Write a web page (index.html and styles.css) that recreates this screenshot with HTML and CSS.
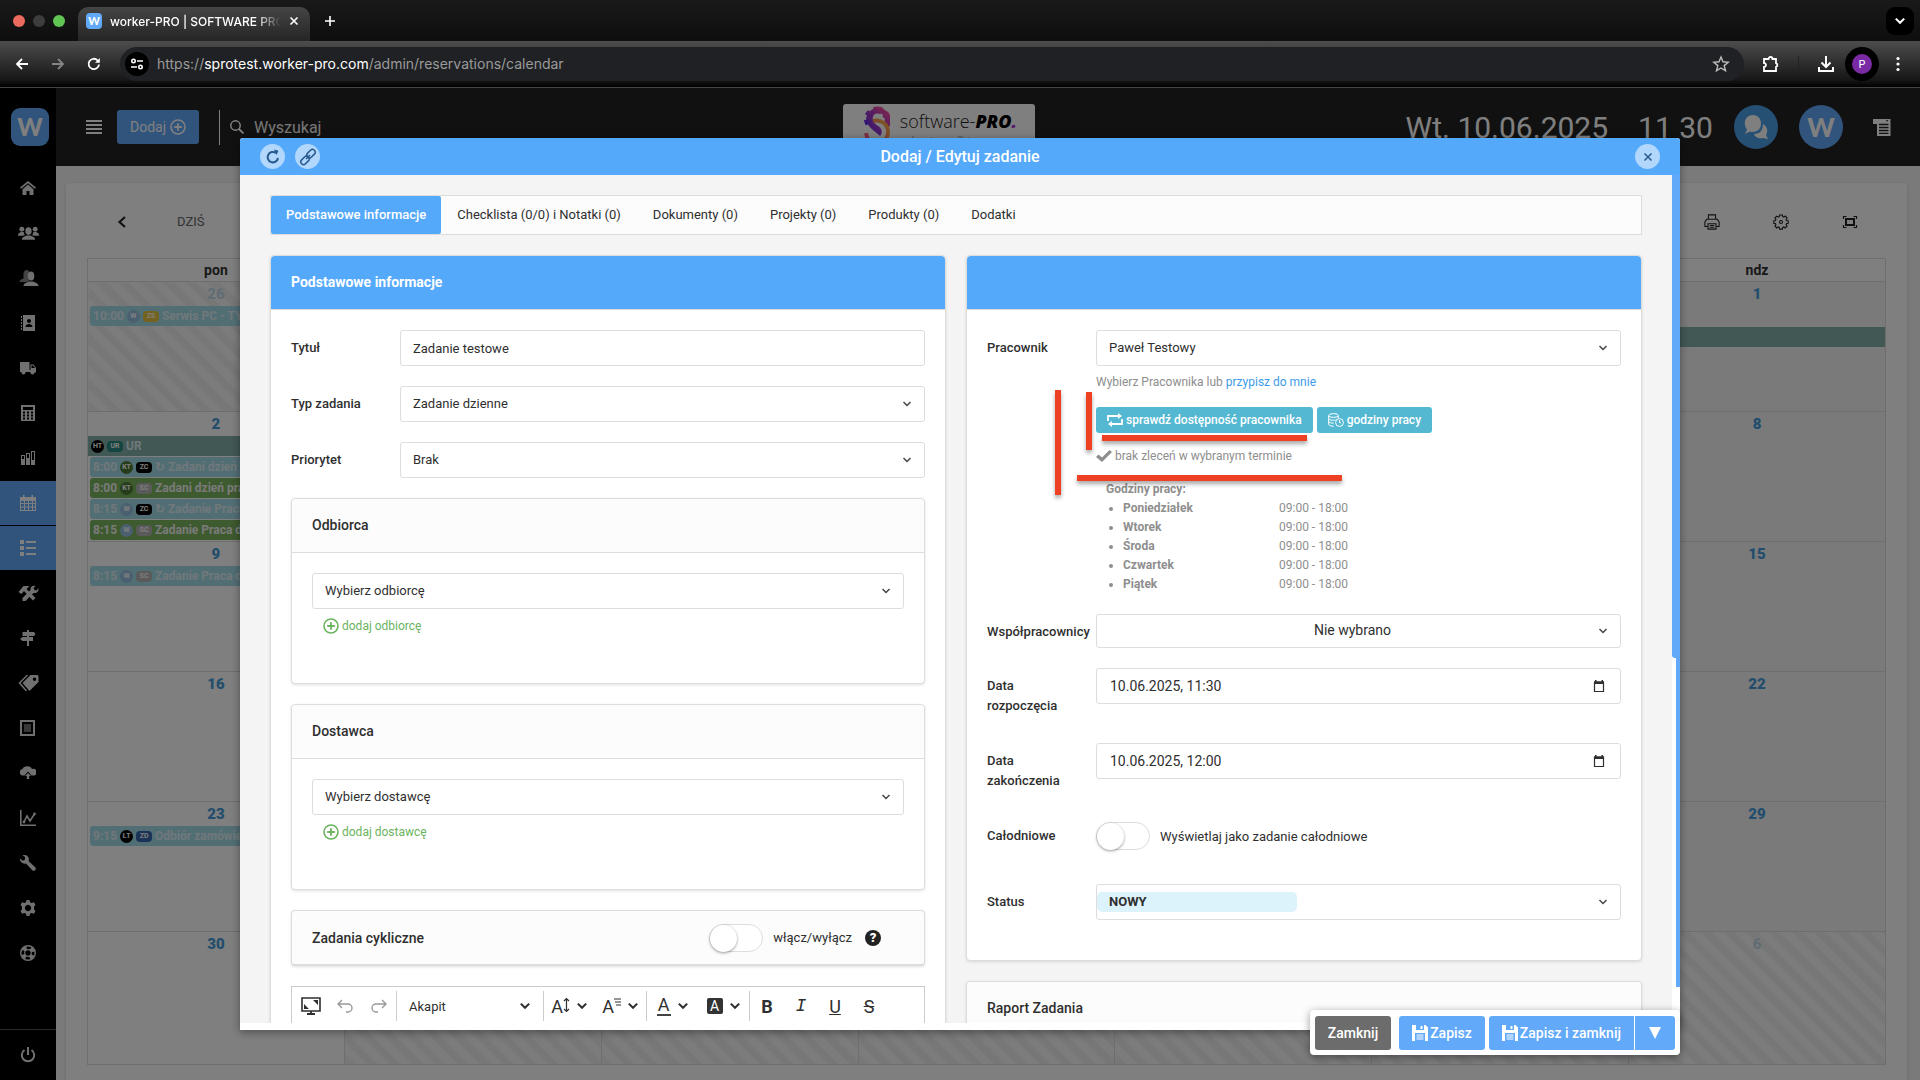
FILE: index.html
```html
<!DOCTYPE html>
<html lang="pl">
<head>
    <meta charset="UTF-8">
    <meta name="viewport" content="width=device-width, initial-scale=1.0">
    <title>worker-PRO | SOFTWARE PRO</title>
    <link rel="stylesheet" href="styles.css">
</head>
<body>
    <!-- icons -->
    <svg class="sprite" xmlns="http://www.w3.org/2000/svg">
        <symbol id="i-plus" viewBox="0 0 16 16"><circle cx="8" cy="8" r="7" fill="none" stroke="currentColor" stroke-width="1.6"/><path d="M8 4.2v7.6M4.2 8h7.6" stroke="currentColor" stroke-width="1.8"/></symbol>
        <symbol id="i-chevron" viewBox="0 0 10 10"><path d="M1.500 3l3.500 3.500 3.500-3.500" fill="none" stroke="currentColor" stroke-width="1.700"/></symbol>
        <symbol id="i-save" viewBox="0 0 16 16"><path fill="currentColor" fill-rule="evenodd" d="M0 0h13.500L16 2.500V16H0zM4 0v5h8V0zM3 8v8h10V8z"/><path fill="currentColor" d="M8.500 1h2v3h-2zM4.500 9.500h7v1h-7zM4.500 11.500h7v1h-7zM4.500 13.500h7v1h-7z"/></symbol>
        <symbol id="i-date" viewBox="0 0 14 14"><path d="M2.500 3h9v9.500h-9z" fill="none" stroke="currentColor" stroke-width="1.200"/><path d="M2 2.500h10V5H2zM3 1h1.500v2H3zM9.500 1H11v2H9.500z" fill="currentColor"/></symbol>
    </svg>

    <!-- browser bar -->
    <div class="browser">
        <div class="tab-strip">
            <span class="dot dot-red"></span>
            <span class="dot dot-gray"></span>
            <span class="dot dot-green"></span>
            <div class="browser-tab">
                <span class="favicon">W</span>
                <span class="tab-title">worker-PRO | SOFTWARE PRO</span>
                <button class="plain" aria-label="Zamknij kartę"><svg width="10" height="10" viewBox="0 0 10 10"><path d="M1.500 1.500l7 7m0-7l-7 7" stroke="currentColor" stroke-width="1.600"/></svg></button>
            </div>
            <button class="plain new-tab" aria-label="Nowa karta"><svg width="12" height="12" viewBox="0 0 12 12"><path d="M6 1v10M1 6h10" stroke="currentColor" stroke-width="1.600"/></svg></button>
            <button class="plain tab-list" aria-label="Lista kart"><svg width="12" height="12"><use href="#i-chevron"/></svg></button>
        </div>
        <div class="toolbar">
            <button class="plain" aria-label="Wstecz"><svg width="16" height="16" viewBox="0 0 16 16"><path d="M14 8H3M8 3L3 8l5 5" fill="none" stroke="currentColor" stroke-width="1.800"/></svg></button>
            <button class="plain disabled" aria-label="Dalej"><svg width="16" height="16" viewBox="0 0 16 16"><path d="M2 8h11M8 3l5 5-5 5" fill="none" stroke="currentColor" stroke-width="1.800"/></svg></button>
            <button class="plain" aria-label="Odśwież"><svg width="16" height="16" viewBox="0 0 16 16"><path d="M13 8.500A5.200 5.200 0 1 1 11.500 4.300L13 6" fill="none" stroke="currentColor" stroke-width="1.800"/><path d="M13.800 2v4.800H9z" fill="currentColor"/></svg></button>
            <div class="address">
                <span class="site-info"><svg width="14" height="14" viewBox="0 0 14 14" fill="none" stroke="currentColor" stroke-width="1.600"><circle cx="3.500" cy="4" r="1.700"/><path d="M7 4h6M1 10h6"/><circle cx="10.500" cy="10" r="1.700"/></svg></span>
                <span class="url">https://<b>sprotest.worker-pro.com</b>/admin/reservations/calendar</span>
                <svg class="star" width="18" height="18" viewBox="0 0 18 18"><path d="M9 2l2 4.800 5.200.4-4 3.400 1.300 5.100L9 13l-4.500 2.700 1.300-5.100-4-3.400L7 6.800z" fill="none" stroke="currentColor" stroke-width="1.400"/></svg>
            </div>
            <svg class="puzzle" width="18" height="18" viewBox="0 0 18 18"><path d="M2 4h4.500a2 2 0 0 1 4 0H14v4.200a2 2 0 0 1 0 3.800v4H2v-4a2 2 0 0 0 0-4z" fill="none" stroke="currentColor" stroke-width="1.800"/></svg>
            <span class="bar-divider"></span>
            <svg class="download" width="18" height="18" viewBox="0 0 18 18"><path d="M9 1v11M4.500 7.500L9 12l4.500-4.500M2 12v4h14v-4" fill="none" stroke="currentColor" stroke-width="2"/></svg>
            <span class="profile"><span>P</span></span>
            <svg class="more" width="6" height="18" viewBox="0 0 6 18" fill="currentColor"><circle cx="3" cy="3.500" r="1.600"/><circle cx="3" cy="9" r="1.600"/><circle cx="3" cy="14.500" r="1.600"/></svg>
        </div>
    </div>

    <div class="app">
        <!-- side menu -->
        <nav class="sidebar">
            <a href="#" class="brand">W</a>
            <a href="#" class="nav-item" aria-label="Start"><svg viewBox="0 0 16 16"><path d="M8 1L0 7.500l1.200 1.300L8 3.200l6.800 5.600L16 7.500z"/><path d="M2.500 9.200V15h4v-4h3v4h4V9.200L8 4.600z"/></svg></a>
            <a href="#" class="nav-item" aria-label="Zespół"><svg class="wide" viewBox="0 0 22 16"><circle cx="4" cy="4" r="2.600"/><circle cx="18" cy="4" r="2.600"/><ellipse cx="11" cy="6" rx="3.300" ry="4"/><path d="M0 10c0-2 2-2.500 3-3h3c0 2 1 3 1.500 3.200L5 11H0zM22 10c0-2-2-2.500-3-3h-3c0 2-1 3-1.500 3.200L17 11h5zM4 15c0-3 3-3.500 5-4.500h4c2 1 5 1.500 5 4.500z"/></svg></a>
            <a href="#" class="nav-item" aria-label="Klienci"><svg class="wide" viewBox="0 0 20 16"><path opacity=".6" d="M5 4c0-5 6-5 6-1-2 2-2 6 0 8l-3 1H1c0-2 2-3 4-3.500z"/><ellipse cx="12.500" cy="6" rx="3.300" ry="4.500"/><path d="M5 16c0-3 4-3.500 5.500-4.500h4C16 12.500 20 13 20 16z"/></svg></a>
            <a href="#" class="nav-item" aria-label="Kontakty"><svg viewBox="0 0 16 16"><path fill-rule="evenodd" d="M3 0h12v16H3zM9 4a2 2 0 1 0 .01 0zM5.500 12h7c0-2-1.500-3-3.500-3s-3.500 1-3.500 3zM1 1h1v2H1zM1 4h1v2H1zM1 7h1v2H1zM1 10h1v2H1zM1 13h1v2H1z"/></svg></a>
            <a href="#" class="nav-item" aria-label="Pojazdy"><svg viewBox="0 0 16 16"><path fill-rule="evenodd" d="M0 2h9.500v9H0zM10.500 4.500h3L16 8v4.500h-5.500zM11.500 5.500V8H15l-2-2.500z"/><path d="M0 10h16v2H0z"/><circle cx="3.500" cy="12.500" r="2"/><circle cx="12.500" cy="12.500" r="2"/></svg></a>
            <a href="#" class="nav-item" aria-label="Kalkulator"><svg viewBox="0 0 16 16"><path fill-rule="evenodd" d="M1 0h14v16H1zM3 2v3h10V2zM3 6.500v2h2v-2zM7 6.500v2h2v-2zM11 6.500v2h2v-2zM3 9.500v2h2v-2zM7 9.500v2h2v-2zM11 9.500v2h2v-2zM3 12.500v2h2v-2zM7 12.500v2h2v-2zM11 12.500v2h2v-2z"/></svg></a>
            <a href="#" class="nav-item" aria-label="Statystyki"><svg viewBox="0 0 16 16"><path fill-rule="evenodd" d="M1 5h4v10H1zM2 6v3h2V6zM6 3h4v12H6zM7 4v4h2V4zM11 1h4v14h-4zM12 2v8h2V2z"/></svg></a>
            <a href="#" class="nav-item active" aria-label="Kalendarz"><svg viewBox="0 0 16 16"><path fill-rule="evenodd" d="M0 2h16v14H0zM1 6v2h3V6zM5 6v2h3V6zM9 6v2h3V6zM13 6v2h2V6zM1 9v2.500h3V9zM5 9v2.500h3V9zM9 9v2.500h3V9zM13 9v2.500h2V9zM1 12.500V15h3v-2.500zM5 12.500V15h3v-2.500zM9 12.500V15h3v-2.500zM13 12.500V15h2v-2.500zM3 0h1.500v2H3zM11.500 0H13v2h-1.500z"/></svg></a>
            <a href="#" class="nav-item active" aria-label="Lista zadań"><svg viewBox="0 0 16 16"><path d="M0 0h4v4H0zM0 6h4v4H0zM0 12h4v4H0zM6 1h10v2H6zM6 7h10v2H6zM6 13h10v2H6z"/></svg></a>
            <a href="#" class="nav-item" aria-label="Serwis"><svg class="wide" viewBox="0 0 20 16"><path d="M0 7l5-6h6L8 4l9 9-2.500 2.500L5.500 6 3 9z"/><path d="M4 13l8-8c-.5-3 2-5 5-4l-2 2 1 2 2 .5L20 3c.5 4-2 5.500-5 5l-8 8H4z"/></svg></a>
            <a href="#" class="nav-item" aria-label="Trasy"><svg viewBox="0 0 16 16"><path d="M7 0h2v16H7z"/><path d="M2.500 2H14l1.500 2L14 6H2.500zM13 7H2.500L0 9l2.500 2H13z"/></svg></a>
            <a href="#" class="nav-item" aria-label="Etykiety"><svg class="wide" viewBox="0 0 20 16"><path fill-rule="evenodd" d="M4 8l8-8h7l1 1v6l-9 9zM16 2.500a1.700 1.700 0 1 0 .01 0z"/><path d="M9 0L1 8l7 8M6.500 0" fill="none" stroke="currentColor" stroke-width="1.500"/></svg></a>
            <a href="#" class="nav-item" aria-label="Raporty"><svg viewBox="0 0 16 16"><path fill-rule="evenodd" d="M0 0h15v16H0zM2 2v12h11V2z"/><path d="M4 4.500h7v1H4zM4 6.500h7v1H4zM4 8.500h7v1H4zM4 10.500h7v1H4z"/></svg></a>
            <a href="#" class="nav-item" aria-label="Chmura"><svg viewBox="0 0 16 16"><path d="M2.500 10.500A3.300 3.300 0 0 1 2.500 4 5 4 0 0 1 12 4a3.300 3.300 0 0 1 2.500 6.500H11.500L8 6.500l-3.500 4z"/><path d="M8 8l3 3H9.200v3H6.800v-3H5z"/></svg></a>
            <a href="#" class="nav-item" aria-label="Analizy"><svg viewBox="0 0 16 16"><path d="M.8 0v15.200H16" fill="none" stroke="currentColor" stroke-width="1.600"/><path d="M4 12l3-6 3 5 4.500-7" fill="none" stroke="currentColor" stroke-width="1.600"/><circle cx="4" cy="12" r="1.400"/><circle cx="14.500" cy="4" r="1.400"/></svg></a>
            <a href="#" class="nav-item" aria-label="Narzędzia"><svg viewBox="0 0 16 16"><path d="M0 3.500l3 2.200 2-1L5 2 2.500.3C7-1 10 2.500 8.500 6l7 6.500c1 2-.8 4-3 3L6 8.500C3 9.500-.5 7 0 3.500z"/></svg></a>
            <a href="#" class="nav-item" aria-label="Ustawienia"><svg viewBox="0 0 16 16"><path fill-rule="evenodd" d="M6.500 0h3l.5 2.200 1.500.8L14 2.300l1.500 2.600L14 6.500v3l1.500 1.600L14 13.700l-2.500-.7-1.500.8-.5 2.200h-3L6 13.800 4.500 13l-2.500.7L.5 11.100 2 9.500v-3L.5 4.900 2 2.300l2.500.7L6 2.200zM8 4.800a3.200 3.200 0 1 0 .01 0z"/></svg></a>
            <a href="#" class="nav-item" aria-label="Pomoc"><svg viewBox="0 0 16 16" fill="none" stroke="currentColor"><circle cx="8" cy="8" r="7.300" stroke-width="1.400"/><circle cx="8" cy="8" r="5" stroke-width="4" stroke-dasharray="3.900 3.950" stroke-dashoffset="-2"/><circle cx="8" cy="8" r="3.300" stroke-width="1.200"/></svg></a>
            <a href="#" class="nav-item logout" aria-label="Wyloguj"><svg viewBox="0 0 16 16"><path d="M4.500 3a6.200 6.200 0 1 0 7 0M8 0v8" fill="none" stroke="currentColor" stroke-width="2"/></svg></a>
        </nav>

        <div class="main">
            <header class="topbar">
                <div class="topbar-left">
                    <button class="plain menu-btn" aria-label="Menu"><svg width="16" height="14" viewBox="0 0 16 14"><path d="M0 1h16M0 5h16M0 9h16M0 13h16" stroke="currentColor" stroke-width="2"/></svg></button>
                    <button class="add-btn">Dodaj <svg width="16" height="16"><use href="#i-plus"/></svg></button>
                    <form class="search">
                        <svg width="14" height="14" viewBox="0 0 14 14"><circle cx="5.500" cy="5.500" r="4.700" fill="none" stroke="currentColor" stroke-width="1.500"/><path d="M9 9l4.500 4.500" stroke="currentColor" stroke-width="1.800"/></svg>
                        <input type="text" placeholder="Wyszukaj" aria-label="Wyszukaj">
                    </form>
                </div>
                <div class="company">
                    <svg width="28" height="46" viewBox="0 0 28 46">
                        <defs>
                            <linearGradient id="g1" x1="0" y1="1" x2="1" y2="0"><stop offset="0" stop-color="#5a2ae8"/><stop offset="1" stop-color="#ff4a9e"/></linearGradient>
                            <linearGradient id="g2" x1="1" y1="0" x2="0" y2="1"><stop offset="0" stop-color="#ffb43c"/><stop offset="1" stop-color="#ff4a9e"/></linearGradient>
                        </defs>
                        <path d="M23 24l4-2V13a12 11 0 1 0-21 9c3 4 6 5 11 10 3-3 2-8-2-10-8-4-6-13 0-13s8 5 6 10z" fill="url(#g1)"/>
                        <path d="M15 6a10 9 0 0 0-8 15M15 6a10 9 0 0 1 9 8" fill="none" stroke="url(#g1)" stroke-width="7" stroke-dasharray="4 4"/>
                        <path d="M10 17c8-2 15 3 15 11s-7 12-12 12S4 36 3 29" fill="none" stroke="url(#g2)" stroke-width="4"/>
                    </svg>
                    <div class="company-name">software-<b>PRO<i>.</i></b><small>we boost your efficiency</small></div>
                </div>
                <div class="topbar-right">
                    <span class="clock">Wt. 10.06.2025</span>
                    <span class="clock">11 30</span>
                    <button class="round chat" aria-label="Czat"><svg width="24" height="26" viewBox="0 0 24 26" fill="currentColor"><path d="M9 1c5 0 8 4 8 8.500S14 18 9 18c-1 0-2 0-3-.5L1 20l2-4.500C-1.500 10 1 1 9 1z"/><path d="M19 10c5 3 5 8 3 11l2 4-5-1c-5 1-8-1-9-4 6 0 9-4 9-10z"/></svg></button>
                    <button class="round avatar">W</button>
                    <svg class="log" width="18" height="17" viewBox="0 0 18 17"><path fill="currentColor" fill-rule="evenodd" d="M0 0h17.500v17H4V5H0zM6 4.800v1.400h9.500V4.800zM6 7.800v1.400h9.500V7.800zM6 10.800v1.400h9.500v-1.400zM6 13.800v1.200h9.500v-1.200zM13 1l1 2 1-2z"/></svg>
                </div>
            </header>

            <section class="panel">
                <div class="cal-toolbar">
                    <button class="plain" aria-label="Poprzedni"><svg width="10" height="12" viewBox="0 0 10 12"><path d="M8 1L2.500 6 8 11" fill="none" stroke="currentColor" stroke-width="2.200"/></svg></button>
                    <button class="plain today">DZIŚ</button>
                    <div class="cal-actions">
                        <svg width="16" height="16" viewBox="0 0 18 18" fill="none" stroke="currentColor" stroke-width="1.200"><path d="M5 6V1h8v5M4 14H1V9l2-3h12l2 3v5h-3M4.500 11h9v6h-9zM6.500 13h5M6.500 15h5"/></svg>
                        <svg width="16" height="16" viewBox="0 0 16 16" fill="none" stroke="currentColor" stroke-width="1.100"><path d="M6.600 1h2.800l.3 1.600 1.200.5 1.400-1 1.800 1.900-1 1.300.5 1.200 1.600.3v2.500l-1.600.3-.5 1.200 1 1.400-1.900 1.800-1.300-1-1.200.5-.3 1.600H6.600l-.3-1.600-1.200-.5-1.400 1-1.800-1.900 1-1.300-.5-1.200L.8 9.300V6.800l1.600-.3.5-1.200-1-1.400 1.900-1.800 1.300 1 1.200-.5z"/><circle cx="8" cy="8" r="1.500"/></svg>
                        <svg width="16" height="16" viewBox="0 0 16 16" fill="none" stroke="currentColor"><path d="M4 5h8v6H4z" stroke-width="2"/><path d="M1.500 5V2.500h3M11.500 2.500h3V5M14.500 11v2.500h-3M4.500 13.500h-3V11" stroke-width="1.200"/></svg>
                    </div>
                </div>
                <table class="calendar">
                    <thead>
                        <tr><th>pon</th><th></th><th></th><th></th><th></th><th></th><th>ndz</th></tr>
                    </thead>
                    <tbody>
                        <tr>
                            <td class="other"><span class="day">26</span>
                                <div class="event">10:00 <i class="who blue">W</i> <i class="tag yellow">ZS</i> Serwis PC - TYDZIEŃ</div>
                            </td>
                            <td></td><td></td><td></td><td></td><td></td>
                            <td class="weekend"><span class="day">1</span><div class="event all-day late"></div></td>
                        </tr>
                        <tr>
                            <td><span class="day">2</span>
                                <div class="event all-day"><i class="who black">HT</i> <i class="tag teal">UR</i> UR</div>
                                <div class="event">8:00 <i class="who green">KT</i> <i class="tag black">ZC</i> ↻ Zadani dzień pracy</div>
                                <div class="event done">8:00 <i class="who green">KT</i> <i class="tag gray">SC</i> Zadani dzień pracy</div>
                                <div class="event">8:15 <i class="who blue">W</i> <i class="tag black">ZC</i> ↻ Zadanie Praca dzień</div>
                                <div class="event done">8:15 <i class="who blue">W</i> <i class="tag gray">SC</i> Zadanie Praca dzień</div>
                            </td>
                            <td></td><td></td><td></td><td></td><td></td>
                            <td class="weekend"><span class="day">8</span></td>
                        </tr>
                        <tr>
                            <td><span class="day">9</span>
                                <div class="event">8:15 <i class="who blue">W</i> <i class="tag gray">SC</i> Zadanie Praca dzień</div>
                            </td>
                            <td></td><td></td><td></td><td></td><td></td>
                            <td class="weekend"><span class="day">15</span></td>
                        </tr>
                        <tr>
                            <td><span class="day">16</span></td>
                            <td></td><td></td><td></td><td></td><td></td>
                            <td class="weekend"><span class="day">22</span></td>
                        </tr>
                        <tr>
                            <td><span class="day">23</span>
                                <div class="event">9:15 <i class="who black">ŁT</i> <i class="tag navy">ZD</i> Odbiór zamówienia</div>
                            </td>
                            <td></td><td></td><td></td><td></td><td></td>
                            <td class="weekend"><span class="day">29</span></td>
                        </tr>
                        <tr class="last-week">
                            <td><span class="day">30</span></td>
                            <td class="other"></td><td class="other"></td><td class="other"></td><td class="other"></td><td class="other"></td>
                            <td class="weekend other"><span class="day">6</span></td>
                        </tr>
                    </tbody>
                </table>
            </section>
        </div>

        <!-- task modal -->
        <div class="backdrop">
            <div class="modal" role="dialog" aria-labelledby="modal-title">
                <div class="modal-header">
                    <button class="head-btn" aria-label="Odśwież"><svg width="16" height="16" viewBox="0 0 16 16"><path d="M13 9A5.200 5.200 0 1 1 11 4" fill="none" stroke="currentColor" stroke-width="2"/><path d="M9 .5l4.500 1.200L11.500 6z" fill="currentColor"/></svg></button>
                    <button class="head-btn" aria-label="Kopiuj link"><svg width="18" height="18" viewBox="0 0 18 18" fill="none" stroke="currentColor" stroke-width="1.500"><rect x="7.500" y="3" width="9.500" height="5.500" rx="2.700" transform="rotate(-45 12 6)"/><rect x="1" y="9.500" width="9.500" height="5.500" rx="2.700" transform="rotate(-45 6 12)"/><path d="M7 11l4-4"/></svg></button>
                    <h1 id="modal-title">Dodaj / Edytuj zadanie</h1>
                    <button class="head-btn close" aria-label="Zamknij okno"><svg width="10" height="10" viewBox="0 0 10 10"><path d="M1.500 1.500l7 7m0-7l-7 7" stroke="currentColor" stroke-width="1.500"/></svg></button>
                </div>

                <div class="modal-body">
                    <div class="tabs">
                        <button class="tab active">Podstawowe informacje</button>
                        <button class="tab">Checklista (0/0) i Notatki (0)</button>
                        <button class="tab">Dokumenty (0)</button>
                        <button class="tab">Projekty (0)</button>
                        <button class="tab">Produkty (0)</button>
                        <button class="tab">Dodatki</button>
                    </div>

                    <div class="columns">
                        <div class="column">
                            <div class="card">
                                <h2 class="card-head primary">Podstawowe informacje</h2>
                                <div class="card-body">
                                    <div class="row">
                                        <label for="title">Tytuł</label>
                                        <input class="field" type="text" id="title" value="Zadanie testowe">
                                    </div>
                                    <div class="row">
                                        <label for="type">Typ zadania</label>
                                        <select class="field" id="type"><option>Zadanie dzienne</option></select>
                                    </div>
                                    <div class="row">
                                        <label for="priority">Priorytet</label>
                                        <select class="field" id="priority"><option>Brak</option></select>
                                    </div>

                                    <div class="card sub">
                                        <h2 class="card-head">Odbiorca</h2>
                                        <div class="card-body">
                                            <select class="field" aria-label="Odbiorca"><option>Wybierz odbiorcę</option></select>
                                            <a href="#" class="add-link"><svg width="16" height="16"><use href="#i-plus"/></svg>dodaj odbiorcę</a>
                                        </div>
                                    </div>
                                    <div class="card sub">
                                        <h2 class="card-head">Dostawca</h2>
                                        <div class="card-body">
                                            <select class="field" aria-label="Dostawca"><option>Wybierz dostawcę</option></select>
                                            <a href="#" class="add-link"><svg width="16" height="16"><use href="#i-plus"/></svg>dodaj dostawcę</a>
                                        </div>
                                    </div>
                                    <div class="card cyclic">
                                        <h2>Zadania cykliczne</h2>
                                        <input class="switch" type="checkbox" id="cyclic">
                                        <label for="cyclic">włącz/wyłącz</label>
                                        <span class="help">?</span>
                                    </div>

                                    <div class="editor">
                                        <button class="tool" aria-label="Pełny ekran"><svg width="20" height="18" viewBox="0 0 20 18"><path d="M1 1h18v13H1z" fill="none" stroke="currentColor" stroke-width="1.600"/><path d="M6 17h8M10 14v3" stroke="currentColor" stroke-width="1.800"/><path d="M12 3h5v5zM3 7v5h5z" fill="currentColor"/></svg></button>
                                        <button class="tool off" aria-label="Cofnij"><svg width="16" height="14" viewBox="0 0 16 14"><path d="M5 1L1 5l4 4M1 5h10a3.800 3.800 0 0 1 0 8H9" fill="none" stroke="currentColor" stroke-width="1.400"/></svg></button>
                                        <button class="tool off" aria-label="Ponów"><svg width="16" height="14" viewBox="0 0 16 14"><path d="M11 1l4 4-4 4M15 5H5a3.800 3.800 0 0 0 0 8h2" fill="none" stroke="currentColor" stroke-width="1.400"/></svg></button>
                                        <span class="sep"></span>
                                        <button class="tool heading">Akapit <svg width="12" height="12"><use href="#i-chevron"/></svg></button>
                                        <span class="sep"></span>
                                        <button class="tool drop" aria-label="Rozmiar"><span>A<svg width="7" height="16" viewBox="0 0 7 16"><path d="M3.500 2v12M1 4l2.500-2.500L6 4M1 12l2.500 2.500L6 12" fill="none" stroke="currentColor" stroke-width="1.200"/></svg></span><svg width="12" height="12"><use href="#i-chevron"/></svg></button>
                                        <button class="tool drop" aria-label="Krój"><span>A<svg width="7" height="16" viewBox="0 0 7 16"><path d="M0 2h7M1 5h6M2 8h5" stroke="currentColor" stroke-width="1.200"/></svg></span><svg width="12" height="12"><use href="#i-chevron"/></svg></button>
                                        <span class="sep"></span>
                                        <button class="tool drop" aria-label="Kolor"><span class="under">A</span><svg width="12" height="12"><use href="#i-chevron"/></svg></button>
                                        <button class="tool drop" aria-label="Tło"><span class="filled">A</span><svg width="12" height="12"><use href="#i-chevron"/></svg></button>
                                        <span class="sep"></span>
                                        <button class="tool"><b>B</b></button>
                                        <button class="tool italic"><i>I</i></button>
                                        <button class="tool"><u>U</u></button>
                                        <button class="tool"><s>S</s></button>
                                    </div>
                                </div>
                            </div>
                        </div>

                        <div class="column">
                            <div class="card worker">
                                <h2 class="card-head primary"></h2>
                                <div class="card-body">
                                    <div class="row">
                                        <label for="worker">Pracownik</label>
                                        <div class="control">
                                            <select class="field" id="worker"><option>Paweł Testowy</option></select>
                                            <p class="hint">Wybierz Pracownika lub <a href="#">przypisz do mnie</a></p>
                                            <div class="mini-buttons">
                                                <button class="mini"><svg width="16" height="14" viewBox="0 0 16 14"><path d="M1 8V3h11M15 6v5H4" fill="none" stroke="currentColor" stroke-width="1.800"/><path d="M11 0l4 3-4 3zM5 8l-4 3 4 3z" fill="currentColor"/></svg> sprawdź dostępność pracownika</button>
                                                <button class="mini"><svg width="16" height="14" viewBox="0 0 16 14" fill="none" stroke="currentColor"><ellipse cx="5.500" cy="2.500" rx="4.800" ry="1.900"/><path d="M.7 2.500v9c0 1 3 1.800 5 1.800M.7 5.500c0 1.500 4 2.200 7 1.500M.7 8.500c0 1 3 1.800 5 1.700M10.300 2.500v2.800"/><circle cx="11.500" cy="9.500" r="3.900"/><path d="M11.500 7v2.700H13"/></svg> godziny pracy</button>
                                            </div>
                                            <p class="free"><svg width="16" height="12" viewBox="0 0 16 12"><path d="M0 7l2.500-2.500L6 7.500 13.500 0 16 2 6 12z" fill="currentColor"/></svg> brak zleceń w wybranym terminie</p>
                                            <div class="hours">
                                                <b>Godziny pracy:</b>
                                                <ul>
                                                    <li><b>Poniedziałek</b>09:00 - 18:00</li>
                                                    <li><b>Wtorek</b>09:00 - 18:00</li>
                                                    <li><b>Środa</b>09:00 - 18:00</li>
                                                    <li><b>Czwartek</b>09:00 - 18:00</li>
                                                    <li><b>Piątek</b>09:00 - 18:00</li>
                                                </ul>
                                            </div>
                                            <!-- red marks over the availability result -->
                                            <span class="mark mark-outer"></span>
                                            <span class="mark mark-inner"></span>
                                            <span class="mark mark-button"></span>
                                            <span class="mark mark-result"></span>
                                        </div>
                                    </div>
                                    <div class="row">
                                        <label for="coworkers">Współpracownicy</label>
                                        <select class="field centered" id="coworkers"><option>Nie wybrano</option></select>
                                    </div>
                                    <div class="row date-row">
                                        <label for="start">Data rozpoczęcia</label>
                                        <div class="field date"><input type="text" id="start" value="10.06.2025, 11:30"><button class="plain" aria-label="Wybierz datę"><svg width="14" height="14"><use href="#i-date"/></svg></button></div>
                                    </div>
                                    <div class="row date-row">
                                        <label for="end">Data zakończenia</label>
                                        <div class="field date"><input type="text" id="end" value="10.06.2025, 12:00"><button class="plain" aria-label="Wybierz datę"><svg width="14" height="14"><use href="#i-date"/></svg></button></div>
                                    </div>
                                    <div class="row all-day-row">
                                        <label for="allday">Całodniowe</label>
                                        <input class="switch" type="checkbox" id="allday">
                                        <span>Wyświetlaj jako zadanie całodniowe</span>
                                    </div>
                                    <div class="row">
                                        <label for="status">Status</label>
                                        <select class="field status" id="status"><option>NOWY</option></select>
                                    </div>
                                </div>
                            </div>
                            <div class="card">
                                <h2 class="card-head">Raport Zadania</h2>
                            </div>
                        </div>
                    </div>
                </div>
                <div class="scroll-outer"></div>
                <div class="scroll-inner"></div>

                <div class="modal-footer">
                    <button class="btn btn-gray">Zamknij</button>
                    <button class="btn"><svg width="16" height="16"><use href="#i-save"/></svg> Zapisz</button>
                    <div class="btn-group">
                        <button class="btn"><svg width="16" height="16"><use href="#i-save"/></svg> Zapisz i zamknij</button>
                        <button class="btn caret" aria-label="Więcej"><svg width="12" height="12" viewBox="0 0 12 12"><path d="M0 0h12L6 12z" fill="currentColor"/></svg></button>
                    </div>
                </div>
            </div>
        </div>
    </div>
</body>
</html>
```
FILE: styles.css
```css
:root {
    --primary: #55a9fa;
    --button: #62a9fa;
    --info: #54b8d2;
    --border: #dddddd;
    --text: #2f2f2f;
    --muted: #8e8e8e;
    --mark: #ee4023;
}

* {
    box-sizing: border-box;
}

body {
    margin: 0;
    height: 100vh;
    display: flex;
    flex-direction: column;
    overflow: hidden;
    font-family: Roboto, "Liberation Sans", sans-serif;
    font-size: 13px;
    color: var(--text);
}

button, input, select {
    font: inherit;
    color: inherit;
}

h1, h2, p, ul {
    margin: 0;
    padding: 0;
}

a {
    text-decoration: none;
}

.sprite {
    display: none;
}

.plain {
    display: flex;
    align-items: center;
    justify-content: center;
    background: none;
    border: 0;
    padding: 0;
}

/* browser bar */
.browser {
    flex: none;
    background: #000;
    color: #fff;
    font-family: Inter, "Liberation Sans", sans-serif;
}

.tab-strip {
    display: flex;
    align-items: center;
    gap: 8px;
    height: 41px;
    padding: 0 6px 0 13px;
    background: linear-gradient(#191919, #0e0e0e);
}

.dot {
    width: 12px;
    height: 12px;
    border-radius: 50%;
}

.dot-red { background: #ed6a5e; }
.dot-gray { background: #3d3d3d; }
.dot-green { background: #61c554; }

.browser-tab {
    display: flex;
    align-items: center;
    align-self: flex-end;
    gap: 8px;
    width: 232px;
    height: 34px;
    margin-left: 5px;
    padding: 0 11px 6px 8px;
    border-radius: 10px 10px 0 0;
    background: linear-gradient(#454545, #252525);
}

.favicon {
    width: 16px;
    height: 16px;
    border-radius: 4px;
    background: var(--button);
    font: 900 11px/16px Lato, sans-serif;
    text-align: center;
}

.tab-title {
    flex: 1;
    overflow: hidden;
    white-space: nowrap;
    font-size: 12px;
    font-weight: 500;
    mask-image: linear-gradient(90deg, #000 85%, transparent);
}

.new-tab {
    width: 28px;
    height: 28px;
    margin-left: -2px;
}

.tab-list {
    width: 28px;
    height: 28px;
    margin-left: auto;
    border-radius: 9px;
    background: #000;
}

.toolbar {
    display: flex;
    align-items: center;
    height: 47px;
    padding: 0 19px 1px 14px;
    border-bottom: 1px solid #444;
    background: linear-gradient(#4d4d4d, #161616 85%, #000);
}

.toolbar > .plain {
    width: 16px;
    margin-right: 20px;
}

.toolbar .disabled {
    color: #858585;
}

.address {
    display: flex;
    align-items: center;
    flex: 1;
    height: 34px;
    margin-left: -2px;
    padding: 0 14px 0 5px;
    border-radius: 17px;
    background: #202124;
}

.site-info {
    display: flex;
    align-items: center;
    justify-content: center;
    width: 24px;
    height: 24px;
    margin-right: 8px;
    border-radius: 50%;
    background: #000;
}

.url {
    flex: 1;
    font-size: 14px;
    color: #9a9a9a;
}

.url b {
    font-weight: 400;
    color: #fff;
}

.star { color: #bbb; }
.puzzle { margin: 0 18px; }

.bar-divider {
    width: 1px;
    height: 16px;
    background: #222;
}

.download { margin: 0 10px 0 18px; }

.profile {
    display: flex;
    align-items: center;
    justify-content: center;
    width: 34px;
    height: 34px;
    margin-right: 16px;
    border-radius: 50%;
    background: #000;
}

.profile span {
    width: 20px;
    height: 20px;
    border-radius: 50%;
    background: #7a2aa3;
    font-size: 11px;
    line-height: 20px;
    text-align: center;
}

/* application */
.app {
    position: relative;
    display: flex;
    flex: 1;
    min-height: 0;
    overflow: hidden;
    background: #f4f4f4;
}

.sidebar {
    display: flex;
    flex-direction: column;
    flex: none;
    width: 56px;
    background: #000;
    color: #e8e8e8;
}

.brand {
    width: 38px;
    height: 38px;
    margin: 20px 7px 20px 11px;
    border-radius: 9px;
    background: #62a9fa;
    color: #fff;
    font: 900 24px/38px Lato, sans-serif;
    text-align: center;
}

.nav-item {
    display: flex;
    align-items: center;
    justify-content: center;
    height: 45px;
    border-bottom: 1px solid #000;
    color: #e0e0e0;
}

.nav-item svg {
    width: 16px;
    height: 16px;
    fill: currentColor;
}

.nav-item svg[fill="none"] {
    fill: none;
}

.nav-item .wide {
    width: 21px;
}

.nav-item.active {
    background: #62a9fa;
    color: #fff;
}

.nav-item.logout {
    height: 51px;
    margin-top: auto;
    border-top: 1px solid #555;
    border-bottom: 0;
}

.main {
    flex: 1;
    min-width: 0;
}

.topbar {
    display: flex;
    align-items: center;
    justify-content: space-between;
    height: 78px;
    padding: 0 29px 0 30px;
    background: #222;
    color: #fff;
}

.topbar-left,
.topbar-right {
    display: flex;
    align-items: center;
}

.menu-btn {
    margin-right: 15px;
}

.add-btn {
    display: flex;
    align-items: center;
    justify-content: center;
    gap: 4px;
    width: 82px;
    height: 34px;
    margin-right: 20px;
    border: 0;
    border-radius: 3px;
    background: #62a9fa;
    font-size: 14px;
    color: #fff;
}

.search {
    display: flex;
    align-items: center;
    gap: 8px;
    height: 35px;
    padding-left: 10px;
    border-left: 1px solid #fff;
}

.search input {
    width: 220px;
    padding: 0 2px;
    border: 0;
    background: none;
    font-size: 16px;
}

.search input::placeholder {
    color: #eee;
}

.company {
    display: flex;
    align-items: center;
    gap: 9px;
    width: 192px;
    height: 46px;
    padding-left: 20px;
    border-radius: 3px;
    background: #fff;
    color: #222;
}

.company-name {
    font: 300 18px/24px "Open Sans", sans-serif;
}

.company-name b {
    font-weight: 800;
    font-style: italic;
    color: #000;
}

.company-name i {
    color: #b030e0;
}

.company-name small {
    display: block;
    font-size: 8px;
    line-height: 12px;
}

.clock {
    margin-right: 30px;
    font-size: 30px;
    white-space: nowrap;
}

.clock + .clock {
    margin-right: 21px;
}

.round {
    display: flex;
    align-items: center;
    justify-content: center;
    width: 44px;
    height: 44px;
    padding: 0;
    border: 0;
    border-radius: 50%;
    background: #4d9fe8;
    color: #fff;
}

.round.avatar {
    margin: 0 30px 0 21px;
    background: #62a9fa;
    font: 900 26px/44px Lato, sans-serif;
}

.panel {
    margin: 17px 13px 0 10px;
    padding: 0 21px 60px;
    border-radius: 4px;
    background: #fff;
    box-shadow: 0 1px 3px rgba(0, 0, 0, 0.15);
}

.cal-toolbar {
    display: flex;
    align-items: center;
    height: 75px;
    padding: 2px 28px 0 30px;
    color: #222;
}

.today {
    margin-left: 50px;
    color: #666;
}

.cal-actions {
    display: flex;
    gap: 53px;
    margin-left: auto;
}

.calendar {
    width: 100%;
    border-collapse: collapse;
    table-layout: fixed;
}

.calendar th,
.calendar td {
    padding: 0;
    border: 1px solid #ddd;
}

.calendar th {
    height: 23px;
    font-size: 14px;
    line-height: 20px;
    color: #333;
}

.calendar td {
    height: 130px;
    vertical-align: top;
}

.calendar .last-week td {
    height: 133px;
}

.calendar .weekend {
    background-color: #f5f5f5;
}

.calendar .other {
    background-image: repeating-linear-gradient(45deg, #efefef 0, #efefef 8px, #f9f9f9 8px, #f9f9f9 16px);
}

.day {
    display: block;
    font-size: 15px;
    font-weight: 900;
    line-height: 24px;
    text-align: center;
    color: #479bd8;
}

.other .day {
    color: #c4d9e8;
}

.event {
    display: flex;
    align-items: center;
    gap: 3px;
    height: 20px;
    margin: 0 2px 1px;
    padding-left: 3px;
    overflow: hidden;
    border-radius: 3px;
    background: #a4dcea;
    color: #e0f0f4;
    font-size: 12px;
    font-weight: 700;
    white-space: nowrap;
}

.event.done {
    background: #7cb45e;
    color: #f4f4f4;
}

.event.all-day {
    margin: 0 0 1px;
    border-radius: 0;
    background: #84b0aa;
}

.event.late {
    margin-top: 21px;
}

.who,
.tag {
    flex: none;
    font-size: 7px;
    font-style: normal;
    text-align: center;
    color: #fff;
}

.who {
    width: 13px;
    line-height: 13px;
    border-radius: 50%;
}

.tag {
    width: 16px;
    line-height: 11px;
    border-radius: 4px;
}

.blue { background: #94bfe0; }
.yellow { background: #e8c63e; }
.black { background: #000; }
.green { background: #4b7a35; }
.gray { background: #b5b5b5; }
.teal { background: #2b8a80; }
.navy { background: #3466ac; }

/* modal */
.backdrop {
    position: absolute;
    inset: 0;
    padding: 50px 12.5%;
    background: rgba(0, 0, 0, 0.5);
}

.modal {
    position: relative;
    display: flex;
    flex-direction: column;
    height: 100%;
    border-radius: 3px 3px 0 0;
    background: #fff;
    box-shadow: 0 2px 8px rgba(0, 0, 0, 0.4);
}

.modal-header {
    display: flex;
    align-items: center;
    flex: none;
    gap: 10px;
    height: 37px;
    padding: 0 20px;
    border-radius: 3px 3px 0 0;
    background: var(--primary);
    color: #fff;
}

.modal-header h1 {
    flex: 1;
    padding-right: 35px;
    font-size: 16px;
    font-weight: 500;
    text-align: center;
}

.head-btn {
    display: flex;
    align-items: center;
    justify-content: center;
    width: 25px;
    height: 25px;
    padding: 0;
    border: 0;
    border-radius: 50%;
    background: #b2d7fd;
    color: #28598c;
}

.modal-body {
    flex: 1;
    min-height: 0;
    margin-bottom: 7px;
    padding: 20px 38px 0 30px;
    overflow: hidden;
    background: #f4f4f4;
}

.tabs {
    display: flex;
    height: 40px;
    margin-bottom: 20px;
    border: 1px solid var(--border);
    background: #fcfcfc;
}

.tab {
    padding: 0 16px 2px;
    border: 0;
    border-radius: 2px;
    background: none;
}

.tab.active {
    padding: 0 15px 2px;
    background: var(--primary);
    font-weight: 500;
    color: #fff;
}

.columns {
    display: grid;
    grid-template-columns: 1fr 1fr;
    gap: 20px;
}

.card {
    margin-bottom: 20px;
    border: 1px solid var(--border);
    border-radius: 4px;
    background: #fff;
    box-shadow: 0 1px 3px rgba(0, 0, 0, 0.12);
}

.card-head {
    height: 54px;
    padding: 0 20px;
    border-bottom: 1px solid var(--border);
    border-radius: 4px 4px 0 0;
    background: #fcfcfc;
    font-size: 14px;
    font-weight: 500;
    line-height: 52px;
}

.card-head.primary {
    background: var(--primary);
    font-weight: 700;
    color: #fff;
}

.card-body {
    padding: 20px;
}

.row {
    display: flex;
    align-items: flex-start;
    margin-bottom: 20px;
}

.row > label {
    flex: none;
    width: 109px;
    padding: 8px 20px 0 0;
    font-weight: 500;
    line-height: 20px;
}

.field {
    display: block;
    flex: 1;
    width: 100%;
    min-width: 0;
    height: 36px;
    padding: 0 12px;
    border: 1px solid var(--border);
    border-radius: 3px;
    background: #fff;
}

select.field {
    padding-bottom: 2px;
    appearance: none;
    background: #fff url("data:image/svg+xml,%3Csvg xmlns='http://www.w3.org/2000/svg' viewBox='0 0 10 10'%3E%3Cpath d='M1.500 3l3.500 3.500 3.500-3.500' fill='none' stroke='%23444' stroke-width='1.500'/%3E%3C/svg%3E") no-repeat right 12px center / 10px 10px;
}

select.centered {
    height: 34px;
    padding-right: 24px;
    text-align-last: center;
    font-size: 14px;
}

.card.sub {
    min-height: 186px;
}

.add-link {
    display: inline-flex;
    align-items: center;
    gap: 3px;
    margin: 9px 0 0 11px;
    font-size: 12px;
    color: #6bb35f;
}

.card.cyclic {
    display: flex;
    align-items: center;
    height: 56px;
    padding: 0 43px 0 20px;
    border-bottom-width: 2px;
    background: #fcfcfc;
}

.cyclic h2 {
    flex: 1;
    font-size: 14px;
    font-weight: 500;
}

.cyclic label {
    margin: 0 13px 0 10px;
}

.help {
    width: 16px;
    height: 16px;
    border-radius: 50%;
    background: #222;
    color: #fff;
    font-weight: 900;
    line-height: 16px;
    text-align: center;
}

.switch {
    flex: none;
    width: 54px;
    height: 28px;
    margin: 0;
    appearance: none;
    border: 1px solid var(--border);
    border-radius: 14px;
    background: #fff;
}

.switch::before {
    content: "";
    display: block;
    width: 27px;
    height: 27px;
    border-radius: 50%;
    background: #fff;
    box-shadow: 0 1px 3px rgba(0, 0, 0, 0.4);
}

.switch:checked {
    background: var(--primary);
}

/* text editor */
.editor {
    display: flex;
    align-items: center;
    height: 40px;
    padding: 0 2px;
    border: 1px solid #ccc;
}

.tool {
    display: flex;
    align-items: center;
    justify-content: center;
    width: 34px;
    height: 30px;
    padding: 0;
    border: 0;
    background: none;
    font-size: 18px;
}

.tool.off {
    color: #999;
}

.tool.heading {
    justify-content: space-between;
    width: 146px;
    padding: 0 12px;
    font-size: 13px;
}

.tool.drop {
    gap: 6px;
    width: 51px;
}

.tool.italic {
    font-family: "Liberation Mono", monospace;
}

.sep {
    width: 1px;
    height: 30px;
    background: #ccc;
}

.under {
    width: 14px;
    border-bottom: 2px solid #444;
    line-height: 18px;
}

.filled {
    width: 16px;
    border-radius: 2px;
    background: #333;
    color: #fff;
    font-size: 14px;
    line-height: 16px;
}

/* worker column */
.control {
    position: relative;
    flex: 1;
    min-width: 0;
}

.hint {
    margin: 6px 0 15px;
    font-size: 12px;
    line-height: 20px;
    color: var(--muted);
}

.hint a {
    color: #3d9be9;
}

.mini-buttons {
    display: flex;
    gap: 4px;
}

.mini {
    display: flex;
    align-items: center;
    gap: 3px;
    height: 26px;
    padding: 0 11px;
    border: 0;
    border-radius: 3px;
    background: var(--info);
    color: #fff;
    font-size: 12px;
    font-weight: 500;
}

.free {
    display: flex;
    align-items: center;
    gap: 3px;
    margin-top: 13px;
    font-size: 12px;
    line-height: 20px;
    color: var(--muted);
}

.hours {
    padding: 14px 0 0 10px;
    font-size: 12px;
    line-height: 19px;
    color: var(--muted);
}

.hours ul {
    padding-left: 17px;
}

.hours li b {
    display: inline-block;
    width: 156px;
}

.mark {
    position: absolute;
    background: var(--mark);
    box-shadow: 0 3px 4px rgba(0, 0, 0, 0.35);
}

.mark-outer {
    top: 60px;
    left: -41px;
    width: 6px;
    height: 105px;
}

.mark-inner {
    top: 62px;
    left: -10px;
    width: 6px;
    height: 58px;
}

.mark-button {
    top: 105px;
    left: 6px;
    width: 205px;
    height: 6px;
}

.mark-result {
    top: 145px;
    left: -19px;
    width: 265px;
    height: 6px;
}

.date-row {
    min-height: 55px;
}

.field.date {
    display: flex;
    align-items: center;
    padding-right: 14px;
}

.date input {
    flex: 1;
    min-width: 0;
    padding: 0 1px;
    border: 0;
    background: none;
    font-size: 14px;
}

.all-day-row {
    align-items: center;
    height: 36px;
    margin-bottom: 30px;
}

.all-day-row > label {
    padding-top: 0;
}

.all-day-row > span {
    margin-left: 10px;
}

.field.status {
    font-weight: 700;
    background-image: url("data:image/svg+xml,%3Csvg xmlns='http://www.w3.org/2000/svg' viewBox='0 0 10 10'%3E%3Cpath d='M1.500 3l3.500 3.500 3.500-3.500' fill='none' stroke='%23444' stroke-width='1.500'/%3E%3C/svg%3E"), url("data:image/svg+xml,%3Csvg xmlns='http://www.w3.org/2000/svg' width='200' height='20'%3E%3Crect width='200' height='20' rx='5' fill='%23dcf3fc'/%3E%3C/svg%3E");
    background-repeat: no-repeat;
    background-position: right 12px center, left center;
    background-size: 10px 10px, 200px 20px;
}

.scroll-outer,
.scroll-inner {
    position: absolute;
    top: 37px;
    right: 0;
    width: 8px;
    background: #fff;
}

.scroll-outer {
    bottom: 0;
    background: linear-gradient(var(--button), var(--button)) no-repeat right top / 4px 95%, #fff;
}

.scroll-inner {
    height: 483px;
    border-radius: 0 0 0 3px;
    background: var(--button);
}

.modal-footer {
    position: absolute;
    right: 0;
    bottom: -25px;
    display: flex;
    align-items: center;
    gap: 4px;
    padding: 6px 5px 5px;
    border-radius: 4px;
    background: #fff;
    box-shadow: 0 2px 8px rgba(0, 0, 0, 0.4);
}

.btn {
    display: flex;
    align-items: center;
    gap: 2px;
    height: 34px;
    padding: 0 13px;
    border: 0;
    border-radius: 3px;
    background: var(--button);
    color: #fff;
    font-size: 14px;
    font-weight: 500;
}

.btn-gray {
    margin-right: 4px;
    background: #6c6c6c;
}

.btn-group {
    display: flex;
    gap: 1px;
}

.btn-group .btn:first-child {
    border-radius: 3px 0 0 3px;
}

.btn-group .caret {
    width: 40px;
    padding: 0 14px;
    border-radius: 0 3px 3px 0;
}
```
